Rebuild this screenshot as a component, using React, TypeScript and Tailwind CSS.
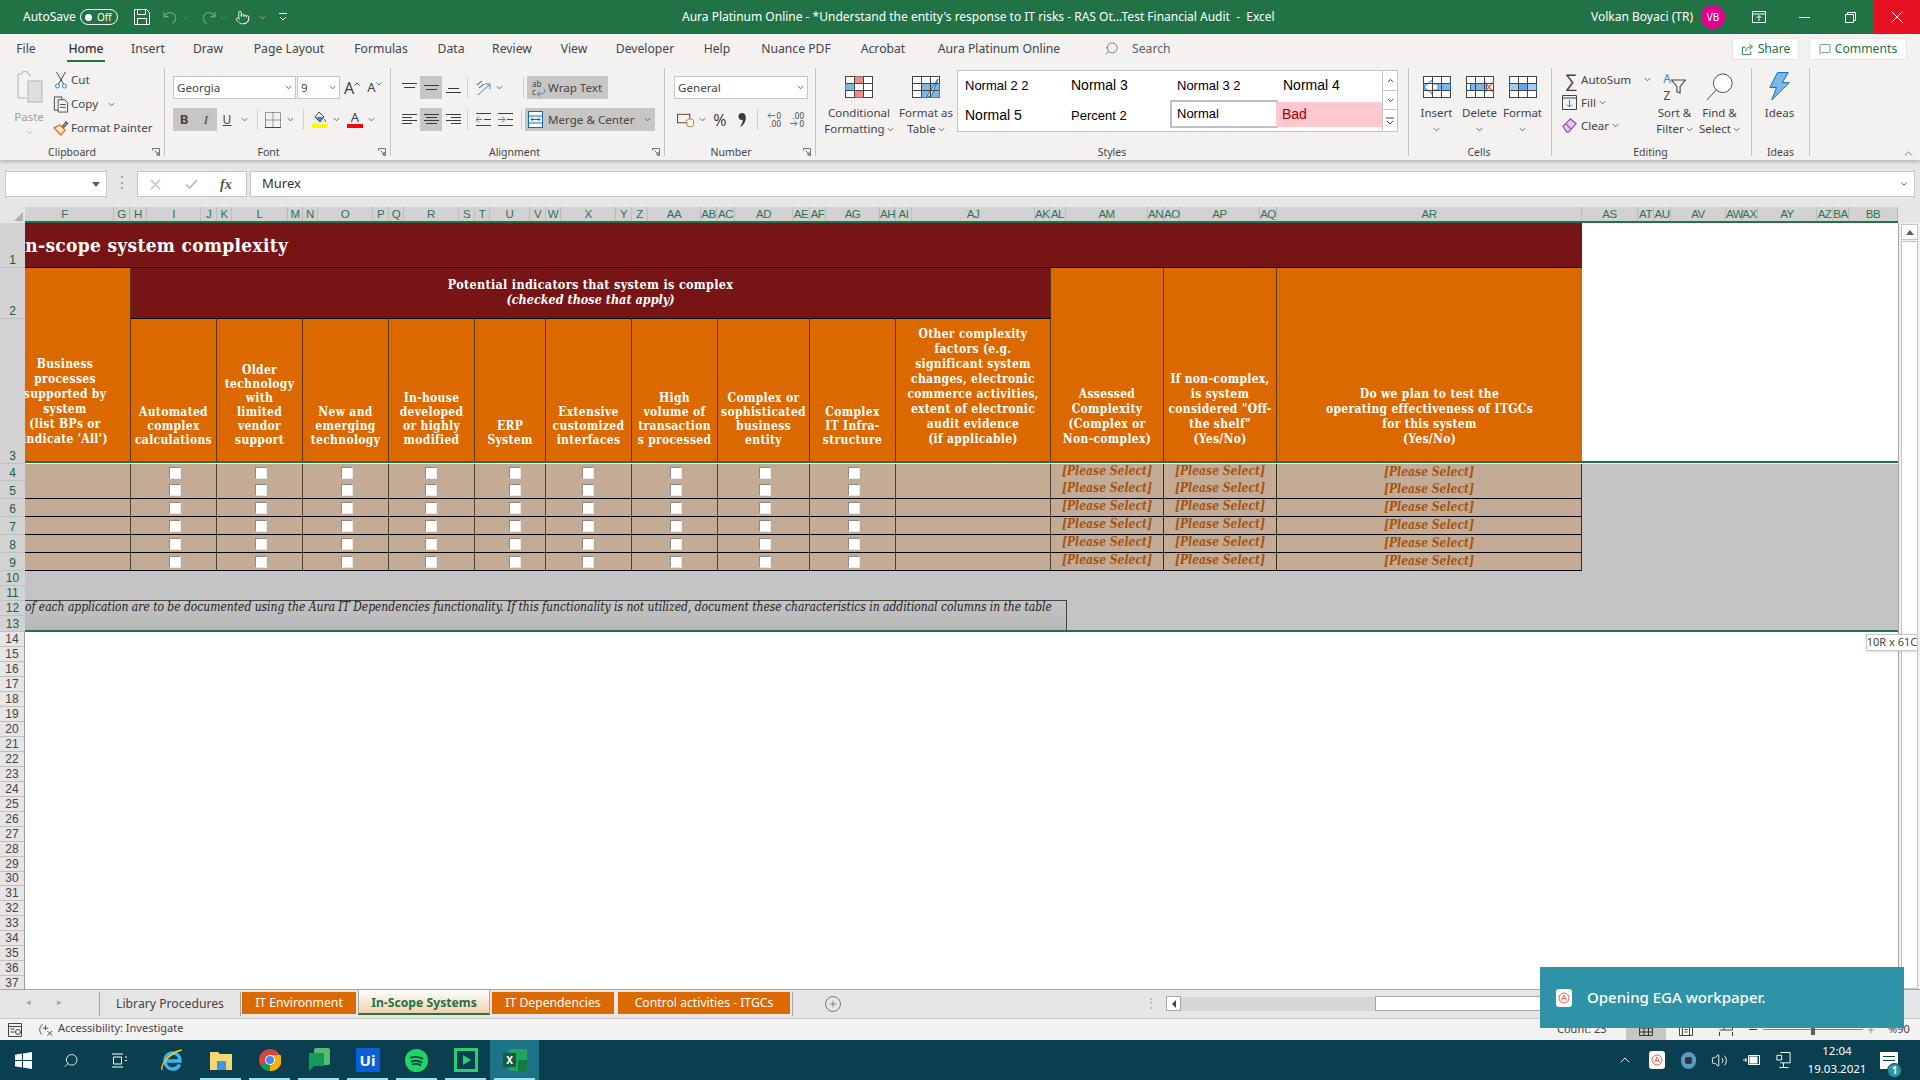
import { Pointer, Search, MessageSquare, Plus, ChevronUp, ChevronDown, Volume2 } from 'lucide-react'
import type { ReactNode } from 'react'

const serif = "font-['DejaVu_Serif_Condensed','DejaVu_Serif',serif]"

const Chev = ({ className = '' }: { className?: string }) => (
  <svg viewBox="0 0 8 5" className={`w-[7px] h-[5px] ${className}`} fill="none" stroke="#605e5c" strokeWidth="1.1">
    <path d="M1 1l3 3 3-3" />
  </svg>
)

const Launcher = () => (
  <svg viewBox="0 0 9 9" className="w-[8px] h-[8px]" fill="none" stroke="#605e5c" strokeWidth="1">
    <path d="M.5 3V.5H8.5V8.5H6M3 3l4 4M7 4.5V7H4.5" />
  </svg>
)

const Lines = ({ rows }: { rows: [number, number, number][] }) => (
  <svg viewBox="0 0 15 15" className="w-[15px] h-[15px]" stroke="#3b3a39" strokeWidth="1">
    {rows.map(([a, b, y]) => (
      <path key={y} d={`M${a} ${y}.5H${b}`} />
    ))}
  </svg>
)

// cell grid used by Insert, Delete, Format and the other big style buttons
const GridIcon = ({ children }: { children?: ReactNode }) => (
  <svg viewBox="0 0 30 24" className="w-[30px] h-[24px]" fill="none">
    <rect x="1.5" y="1.5" width="27" height="21" fill="#fff" stroke="#444" />
    {children}
    <path d="M10.5 1.5v21M19.5 1.5v21M1.5 8.5h27M1.5 15.5h27" stroke="#444" />
  </svg>
)

const AuraIcon = () => (
  <div className="w-[16px] h-[18px] bg-white rounded-[3px] flex items-center justify-center">
    <svg viewBox="0 0 12 12" className="w-[12px] h-[12px]" fill="none" stroke="#e8604c" strokeWidth="1">
      <circle cx="6" cy="6" r="5" />
      <path d="M3.5 8.5L6 3l2.5 5.500M4.500 6.500h3" />
    </svg>
  </div>
)

const tabs: [string, number][] = [
  ['File', 52], ['Home', 68], ['Insert', 56], ['Draw', 64], ['Page Layout', 98], ['Formulas', 86], ['Data', 54],
  ['Review', 68], ['View', 56], ['Developer', 86], ['Help', 58], ['Nuance PDF', 100], ['Acrobat', 74], ['Aura Platinum Online', 158],
]

function TitleBar() {
  return (
    <div className="h-[34px] bg-[#217346] text-white flex items-center text-[12px] shrink-0">
      <span className="ml-[23px] w-[57px]">AutoSave</span>
      <div className="w-[38px] h-[16px] border border-white rounded-full flex items-center pl-[4px] gap-[5px]">
        <div className="w-[7px] h-[7px] bg-white rounded-full" />
        <span className="text-[10px]">Off</span>
      </div>
      <svg viewBox="0 0 16 16" className="ml-[16px] w-[16px] h-[16px]" fill="none" stroke="#fff">
        <path d="M.5.5h12l3 3v12H.5zM3.500.5v5h8v-5M3.500 15.500v-6h9v6" />
      </svg>
      <svg viewBox="0 0 16 16" className="ml-[13px] w-[15px] h-[15px]" fill="none" stroke="#6fa78c" strokeWidth="1.2">
        <path d="M1 2v5h5M1.500 7C3 3 9 1 12 4.500s1.500 8-2 10" />
      </svg>
      <Chev className="ml-[4px] opacity-40 invert" />
      <svg viewBox="0 0 16 16" className="ml-[12px] w-[15px] h-[15px] -scale-x-100" fill="none" stroke="#6fa78c" strokeWidth="1.2">
        <path d="M1 2v5h5M1.500 7C3 3 9 1 12 4.500s1.500 8-2 10" />
      </svg>
      <Chev className="ml-[4px] opacity-40 invert" />
      <Pointer className="ml-[8px] w-[15px] h-[17px]" strokeWidth={1.4} />
      <Chev className="ml-[9px] invert" />
      <svg viewBox="0 0 8 8" className="ml-[13px] w-[8px] h-[8px]" fill="none" stroke="#fff">
        <path d="M0 .5h8M1 4l3 3 3-3" />
      </svg>
      <span className="ml-[395px] w-[560px] whitespace-nowrap text-[12px]">
        Aura Platinum Online - *Understand the entity's response to IT risks - RAS Ot...Test Financial Audit&nbsp; -&nbsp; Excel
      </span>
      <span className="ml-[349px] w-[109px] whitespace-nowrap">Volkan Boyaci (TR)</span>
      <div className="ml-[1px] w-[24px] h-[24px] rounded-full bg-[#e3008c] text-[10px] flex items-center justify-center">VB</div>
      <svg viewBox="0 0 14 12" className="ml-[27px] w-[14px] h-[12px]" fill="none" stroke="#fff">
        <path d="M.5.5h13v11H.5zM.5 3h13M7 10V5M4.500 7L7 4.500 9.500 7" />
      </svg>
      <div className="ml-[33px] w-[11px] h-px bg-white" />
      <svg viewBox="0 0 11 11" className="ml-[35px] w-[11px] h-[11px]" fill="none" stroke="#fff">
        <path d="M.5 2.500h8v8h-8zM2.500 2.500v-2h8v8h-2" />
      </svg>
      <div className="ml-[18px] w-[46px] h-full bg-[#e81123] flex items-center justify-center">
        <svg viewBox="0 0 12 12" className="w-[12px] h-[12px]" stroke="#fff">
          <path d="M.5.5l11 11M11.500.5l-11 11" />
        </svg>
      </div>
    </div>
  )
}

function TabRow() {
  return (
    <div className="h-[34px] bg-[#f3f2f1] flex items-start text-[12.2px] text-[#444] shrink-0">
      <div className="flex">
        {tabs.map(([name, w], i) => (
          <div
            key={name}
            style={{ width: w }}
            className={`h-[28px] flex items-center justify-center whitespace-nowrap ${i === 1 ? 'font-medium text-[#333]' : ''}`}
          >
            <span className={`h-[28px] leading-[30px] ${i === 1 ? 'border-b-[2px] border-[#217346] px-px' : ''}`}>{name}</span>
          </div>
        ))}
      </div>
      <Search className="ml-[26px] mt-[7px] w-[15px] h-[15px] -scale-x-100 text-[#605e5c]" strokeWidth={1.2} />
      <span className="ml-[13px] mt-[6px] w-[42px] text-[#605e5c]">Search</span>
      <div className="ml-[558px] mt-[4px] w-[67px] h-[22px] bg-white rounded-[2px] border border-[#e5e5e5] flex items-center justify-center gap-[4px] text-[#217346]">
        <svg viewBox="0 0 14 14" className="w-[13px] h-[13px]" fill="none" stroke="#217346">
          <path d="M5 4.500H1.500v8h9V9M5 9c0-3 3-5 6-5M9 1.500L12.500 4 9 7" />
        </svg>
        Share
      </div>
      <div className="ml-[10px] mt-[4px] w-[98px] h-[22px] bg-white rounded-[2px] border border-[#e5e5e5] flex items-center justify-center gap-[4px] text-[#217346]">
        <MessageSquare className="w-[12px] h-[12px]" strokeWidth={1.3} />
        Comments
      </div>
    </div>
  )
}

const Group = ({ label, w, pr = 0, launcher, children }: { label: string; w: number; pr?: number; launcher?: boolean; children: ReactNode }) => (
  <>
    <div style={{ width: w }} className="flex flex-col h-[92px] shrink-0">
      <div className="h-[76px] flex">{children}</div>
      <div style={{ paddingRight: pr }} className="h-[16px] pt-px relative flex items-center justify-center text-[10.5px] text-[#444]">
        {label}
        {launcher && (
          <div className="absolute right-[4px] top-[4px]">
            <Launcher />
          </div>
        )}
      </div>
    </div>
    <div className="w-px h-[88px] bg-[#c8c6c4] shrink-0" />
  </>
)

const Big = ({ w, lines, children }: { w: number; lines: ReactNode[]; children: ReactNode }) => (
  <div style={{ width: w }} className="flex flex-col items-center shrink-0">
    <div className="h-[37px] flex items-center justify-center">{children}</div>
    <div className="text-[11.5px] leading-[16px] text-[#444] text-center whitespace-nowrap">
      {lines.map((l, i) => (
        <div key={i} className="h-[16px] flex items-center justify-center gap-[2px]">
          {l}
        </div>
      ))}
    </div>
  </div>
)

const Sep = ({ ml = 0, mr = 0 }: { ml?: number; mr?: number }) => (
  <div style={{ marginLeft: ml, marginRight: mr }} className="w-px h-[21px] bg-[#d2d0ce] shrink-0" />
)

function Ribbon() {
  return (
    <div className="h-[92px] bg-[#f3f2f1] flex items-start shadow-[0_2px_3px_rgba(0,0,0,0.2)] relative z-10 text-[#444] shrink-0">
      <Group label="Clipboard" w={164} pr={20} launcher>
        <div className="w-[50px] ml-[4px] flex flex-col items-center pt-[3px] text-[#a19f9d]">
          <svg viewBox="0 0 28 32" className="w-[28px] h-[32px]" fill="none" stroke="#b5b3b1">
            <path d="M15 6V3H13a3 3 0 0 0-6 0H3v24h9" />
            <rect x="13" y="10" width="14" height="21" fill="#e1dfdd" />
          </svg>
          <span className="text-[11.5px] mt-[5px]">Paste</span>
          <Chev className="mt-[5px] opacity-40" />
        </div>
        <div className="flex flex-col text-[11.6px] -ml-[2px]">
          {['Cut', 'Copy', 'Format Painter'].map((t, i) => (
            <div key={t} className="h-[24px] flex items-center">
              <div className="w-[18px] flex justify-center">
                {i === 0 && (
                  <svg viewBox="0 0 12 18" className="w-[12px] h-[18px]" fill="none" stroke="#444">
                    <path d="M1.500 1l7 12M10.500 1l-7 12" />
                    <circle cx="2.500" cy="15" r="2" stroke="#2b88d8" />
                    <circle cx="9.500" cy="15" r="2" stroke="#2b88d8" />
                  </svg>
                )}
                {i === 1 && (
                  <svg viewBox="0 0 16 18" className="w-[16px] h-[17px]" fill="#f3f2f1" stroke="#444">
                    <path d="M1 1h8v14H1z" />
                    <path d="M5 4h7l3 3v10H5zM7 9h6M7 12h6" />
                  </svg>
                )}
                {i === 2 && (
                  <svg viewBox="0 0 16 16" className="w-[16px] h-[16px]" fill="none" strokeWidth="1.2">
                    <path d="M9 7l4-5 1.500 1.500L10 8" stroke="#444" />
                    <path d="M7 5l5 5-4 5-7-7z" fill="#fbe3c8" stroke="#d86b16" />
                  </svg>
                )}
              </div>
              <span className="ml-[1px] whitespace-nowrap">{t}</span>
              {i === 1 && <Chev className="ml-[10px]" />}
            </div>
          ))}
        </div>
      </Group>

      <Group label="Font" w={225} pr={18} launcher>
        <div className="pl-[8px] pt-[8px] flex flex-col gap-[9px]">
          <div className="flex items-center h-[23px]">
            <div className="w-[123px] h-[23px] bg-white border border-[#c8c6c4] flex items-center justify-between px-[3px] text-[11.6px]">
              Georgia <Chev />
            </div>
            <div className="w-[43px] h-[23px] ml-[1px] bg-white border border-[#c8c6c4] flex items-center justify-between px-[3px] text-[11.6px]">
              9 <Chev />
            </div>
            <span className="ml-[4px] text-[16px] leading-none">A</span>
            <svg viewBox="0 0 6 4" className="w-[6px] h-[4px] -mt-[8px]" fill="none" stroke="#444"><path d="M.5 3.500L3 1l2.500 2.500" /></svg>
            <span className="ml-[7px] text-[13px] leading-none">A</span>
            <svg viewBox="0 0 6 4" className="w-[6px] h-[4px] -mt-[8px]" fill="none" stroke="#2b88d8"><path d="M.5.5L3 3 5.500.5" /></svg>
          </div>
          <div className="flex items-center h-[23px]">
            <div className="w-[44px] h-[23px] bg-[#c8c6c4] flex items-center text-[13px]">
              <span className="w-[22px] text-center font-bold">B</span>
              <span className="w-[22px] text-center italic font-['Liberation_Serif']">I</span>
            </div>
            <span className="w-[20px] text-center text-[12px] underline">U</span>
            <Chev className="ml-[4px]" />
            <Sep ml={9} mr={7} />
            <svg viewBox="0 0 16 16" className="w-[16px] h-[16px]" fill="none" stroke="#444" strokeDasharray="1 1">
              <path d="M.5.5h15v15H.5zM8 .5v15M.5 8h15" />
              <path d="M0 15.500h16" strokeDasharray="none" />
            </svg>
            <Chev className="ml-[6px]" />
            <Sep ml={9} mr={7} />
            <div className="w-[17px] flex flex-col items-center">
              <svg viewBox="0 0 14 12" className="w-[14px] h-[12px]" fill="none" stroke="#444">
                <path d="M6 1l5 5-4 5-5-5zM11 8c1 1 2 2 1 3" />
                <path d="M3 6h8l-4 5z" fill="#2b88d8" stroke="none" />
              </svg>
              <div className="w-[16px] h-[4px] mt-px bg-[#ffff00]" />
            </div>
            <Chev className="ml-[5px]" />
            <div className="ml-[7px] w-[16px] flex flex-col items-center text-[13px] leading-[13px]">
              A<div className="w-[16px] h-[4px] bg-[#ff0000]" />
            </div>
            <Chev className="ml-[5px]" />
          </div>
        </div>
      </Group>

      <Group label="Alignment" w={273} pr={26} launcher>
        <div className="pl-[11px] pt-[8px] flex flex-col gap-[9px]">
          <div className="flex items-center h-[23px]">
            <div className="w-[18px] flex"><Lines rows={[[0, 15, 3], [2, 13, 7]]} /></div>
            <div className="w-[22px] h-[23px] bg-[#c8c6c4] flex items-center justify-center"><Lines rows={[[0, 15, 5], [2, 13, 9]]} /></div>
            <div className="w-[22px] pl-[4px] flex"><Lines rows={[[2, 13, 8], [0, 15, 12]]} /></div>
            <Sep ml={3} mr={7} />
            <svg viewBox="0 0 17 18" className="w-[17px] h-[18px]" fill="none" stroke="#444">
              <path d="M2 6l5-4M4 9l5-4" />
              <path d="M3 16L14 6M10 5h5v5" stroke="#2b88d8" />
            </svg>
            <Chev className="ml-[4px]" />
            <Sep ml={20} mr={3} />
            <div className="w-[81px] h-[23px] bg-[#c8c6c4] flex items-center text-[11.6px] pl-[5px] gap-[2px] whitespace-nowrap">
              <svg viewBox="0 0 14 18" className="w-[14px] h-[18px] shrink-0" fill="none" stroke="#2b88d8">
                <path d="M12 10c2 4-1 5-6 5M8 12.500L5 15l3 2.500" />
                <text x="0" y="8" fontSize="8" fill="#444" stroke="none">ab</text>
                <text x="0" y="16" fontSize="8" fill="#444" stroke="none">c</text>
              </svg>
              Wrap Text
            </div>
          </div>
          <div className="flex items-center h-[23px]">
            <div className="w-[18px] flex"><Lines rows={[[0, 15, 2], [0, 10, 5], [0, 15, 8], [0, 10, 11]]} /></div>
            <div className="w-[22px] h-[23px] bg-[#c8c6c4] flex items-center justify-center"><Lines rows={[[0, 15, 2], [2, 13, 5], [0, 15, 8], [2, 13, 11]]} /></div>
            <div className="w-[22px] pl-[4px] flex"><Lines rows={[[0, 15, 2], [5, 15, 5], [0, 15, 8], [5, 15, 11]]} /></div>
            <Sep ml={3} mr={8} />
            <svg viewBox="0 0 15 13" className="w-[15px] h-[13px]" fill="none" stroke="#444">
              <path d="M0 .5h15M0 12.500h15M8 6.500h7" />
              <path d="M0 6.500h6M3 3.500l-3 3 3 3" stroke="#2b88d8" />
            </svg>
            <svg viewBox="0 0 15 13" className="ml-[7px] w-[15px] h-[13px]" fill="none" stroke="#444">
              <path d="M0 .5h15M0 12.500h15M9 6.500h6" />
              <path d="M0 6.500h7M4 3.500l3 3-3 3" stroke="#2b88d8" />
            </svg>
            <Sep ml={8} mr={3} />
            <div className="w-[130px] h-[23px] bg-[#c8c6c4] flex items-center text-[11.6px] pl-[3px] gap-[5px] whitespace-nowrap">
              <svg viewBox="0 0 15 17" className="w-[15px] h-[17px] shrink-0" fill="#fff" stroke="#0f6cbd">
                <rect x=".5" y=".5" width="14" height="16" />
                <path d="M.5 5h14M.5 12h14M3 8.500h9M5 6.500l-2 2 2 2M10 6.500l2 2-2 2" fill="none" />
              </svg>
              Merge &amp; Center
              <Chev className="ml-[5px]" />
            </div>
          </div>
        </div>
      </Group>

      <Group label="Number" w={150} pr={18} launcher>
        <div className="pl-[9px] pt-[8px] flex flex-col gap-[9px]">
          <div className="w-[134px] h-[23px] bg-white border border-[#c8c6c4] flex items-center justify-between px-[3px] text-[11.6px]">
            General <Chev />
          </div>
          <div className="flex items-center h-[23px] pl-[3px]">
            <svg viewBox="0 0 18 16" className="w-[17px] h-[15px]" fill="none" stroke="#444">
              <rect x=".5" y="2.500" width="13" height="9" />
              <ellipse cx="14" cy="9" rx="3.500" ry="1.500" fill="#fff" stroke="#d86b16" />
              <path d="M10.500 9v5c0 2 7 2 7 0V9" fill="#fff" stroke="#d86b16" />
            </svg>
            <Chev className="ml-[5px]" />
            <span className="ml-[5px] w-[18px] text-center text-[16px]">%</span>
            <svg viewBox="0 0 8 14" className="ml-[9px] w-[8px] h-[14px] mr-[3px]" fill="#3b3a39">
              <circle cx="4" cy="3.500" r="3.500" />
              <path d="M5 5c2 0 3-1 3-2 0 5-2 9-6 11 2-3 3-6 3-9z" />
            </svg>
            <Sep ml={8} mr={6} />
            <div className="w-[17px] flex flex-col text-[8px] leading-[8px] items-end">
              <div className="flex items-center gap-[1px]">
                <svg viewBox="0 0 8 7" className="w-[8px] h-[7px]" fill="none" stroke="#2b88d8"><path d="M8 3.500H1M3.500 1L1 3.500 3.500 6" /></svg>
                0
              </div>
              <div>.00</div>
            </div>
            <div className="ml-[6px] w-[17px] flex flex-col text-[8px] leading-[8px] items-end">
              <div>.00</div>
              <div className="flex items-center gap-[1px]">
                <svg viewBox="0 0 8 7" className="w-[8px] h-[7px]" fill="none" stroke="#2b88d8"><path d="M0 3.500h7M4.500 1L7 3.500 4.500 6" /></svg>
                0
              </div>
            </div>
          </div>
        </div>
      </Group>

      <Group label="Styles" w={592}>
        <div className="ml-[9px] flex shrink-0">
          <Big w={68} lines={['Conditional', <>Formatting <Chev /></>]}>
            <GridIcon>
              <rect x="10.500" y="1.500" width="9" height="7" fill="#f08a8a" />
              <rect x="1.500" y="8.500" width="9" height="7" fill="#7cb7e8" />
              <rect x="10.500" y="15.500" width="9" height="7" fill="#f08a8a" />
            </GridIcon>
          </Big>
          <Big w={66} lines={['Format as', <>Table <Chev /></>]}>
            <GridIcon>
              <rect x="10.500" y="8.500" width="18" height="14" fill="#7cb7e8" />
              <path d="M27 4L18 18l-3 5 6-3z" fill="#cfe3f5" stroke="#2b6ca8" />
            </GridIcon>
          </Big>
        </div>
        <div className="-ml-[2px] mt-[2px] w-[441px] h-[62px] bg-white border border-[#c8c6c4] flex font-['Liberation_Sans'] text-[14px] text-black shrink-0">
          <div className="grid grid-cols-[106px_106px_106px_106px] grid-rows-[29px_31px] w-[424px]">
            <div className="flex items-center pl-[7px] text-[13px]">Normal 2 2</div>
            <div className="flex items-center pl-[7px]">Normal 3</div>
            <div className="flex items-center pl-[7px] text-[13px]">Normal 3 2</div>
            <div className="flex items-center pl-[7px]">Normal 4</div>
            <div className="flex items-center pl-[7px]">Normal 5</div>
            <div className="flex items-center pl-[7px] text-[13px]">Percent 2</div>
            <div className="flex items-center pl-[5px] border-2 border-[#c0c0c0] text-[13px] -mr-[2px] mb-[3px]">Normal</div>
            <div className="flex items-center pl-[6px] bg-[#ffc7ce] text-[#9c0006] mt-[2px] mb-[4px] -mr-[3px]">Bad</div>
          </div>
          <div className="ml-auto w-[15px] flex flex-col border-l border-[#c8c6c4] bg-[#f3f2f1]">
            <div className="h-[20px] flex items-center justify-center bg-white border-b border-[#c8c6c4]"><ChevronUp className="w-[9px] h-[9px]" strokeWidth={2} /></div>
            <div className="h-[19px] flex items-center justify-center bg-white border-b border-[#c8c6c4]"><ChevronDown className="w-[9px] h-[9px]" strokeWidth={2} /></div>
            <div className="flex-1 flex items-center justify-center bg-white"><svg viewBox="0 0 8 8" className="w-[8px] h-[8px]" fill="none" stroke="#444"><path d="M0 1h8M1 4l3 3 3-3" /></svg></div>
          </div>
        </div>
      </Group>

      <Group label="Cells" w={142} pr={2}>
        <div className="pl-[6px] flex">
          <Big w={43} lines={['Insert', <Chev />]}>
            <GridIcon>
              <path d="M1.500 8.500h27v7H1.500z" fill="#7cb7e8" stroke="#0f6cbd" />
              <path d="M10 5L2 12l8 7v-4h6V9h-6z" fill="#fff" stroke="#2b88d8" />
            </GridIcon>
          </Big>
          <Big w={43} lines={['Delete', <Chev />]}>
            <GridIcon>
              <path d="M5.500 8.500h16v7h-16z" fill="#7cb7e8" stroke="#0f6cbd" />
              <path d="M19 6l10 12M29 6L19 18" stroke="#e8604c" strokeWidth="1.200" />
            </GridIcon>
          </Big>
          <Big w={43} lines={['Format', <Chev />]}>
            <GridIcon>
              <path d="M10.500 8.500h9v7h-9z" fill="#2b88d8" />
              <path d="M1.500 8.500h27v7H1.500z" fill="#7cb7e8" fillOpacity=".7" stroke="#0f6cbd" />
            </GridIcon>
          </Big>
        </div>
      </Group>

      <Group label="Editing" w={199} pr={2}>
        <div className="pl-[10px] w-[105px] text-[11.6px] shrink-0">
          <div className="h-[23px] flex items-center">
            <span className="w-[18px] text-[18px] leading-none text-center">∑</span>
            <span className="ml-[1px]">AutoSum</span>
            <Chev className="ml-[13px]" />
          </div>
          <div className="h-[23px] flex items-center">
            <svg viewBox="0 0 15 15" className="w-[15px] h-[15px] mr-[4px]" fill="none" stroke="#444">
              <path d="M.5.5h14v14H.5zM.5 3h14" />
              <path d="M7.500 5v7M5 9.500l2.500 2.500L10 9.500" stroke="#2b88d8" />
            </svg>
            Fill <Chev className="ml-[3px]" />
          </div>
          <div className="h-[23px] flex items-center">
            <svg viewBox="0 0 16 16" className="w-[15px] h-[15px] mr-[4px]" fill="#e8c8ec" stroke="#9b4fad" strokeWidth="1.300">
              <path d="M1 9l8-8 6 5-8 9H5zM4 6l6 6" />
            </svg>
            Clear <Chev className="ml-[3px]" />
          </div>
        </div>
        <div className="-ml-[5px] flex">
          <Big w={45} lines={['Sort &', <>Filter <Chev /></>]}>
            <div className="flex items-center">
              <div className="text-[12px] leading-[17px] text-center"><div className="text-[#2b88d8]">A</div><div>Z</div></div>
              <svg viewBox="0 0 14 14" className="w-[15px] h-[17px]" fill="none" stroke="#444"><path d="M.5 1h13L8.500 7v6l-3-1V7z" /></svg>
            </div>
          </Big>
          <Big w={45} lines={['Find &', <>Select <Chev /></>]}>
            <svg viewBox="0 0 30 30" className="w-[30px] h-[28px]" fill="none" stroke="#444">
              <circle cx="18" cy="11" r="10" fill="#fff" />
              <path d="M11 18L1 29" />
            </svg>
          </Big>
        </div>
      </Group>

      <Group label="Ideas" w={57}>
        <Big w={55} lines={['Ideas']}>
          <svg viewBox="0 0 22 30" className="w-[23px] h-[29px]" fill="#7cb7e8" stroke="#0f6cbd">
            <path d="M9 .5h11L14 11h7L3 29l5-13H1z" />
          </svg>
        </Big>
      </Group>
      <ChevronUp className="ml-[92px] mt-[79px] w-[13px] h-[13px] text-[#444]" strokeWidth={1.3} />
    </div>
  )
}

function FormulaBar() {
  return (
    <div className="h-[47px] bg-[#e6e6e6] flex items-start pt-[11px] shrink-0">
      <div className="ml-[5px] w-[102px] h-[26px] bg-white border border-[#c8c6c4] flex items-center justify-end pr-[6px]">
        <div className="w-0 h-0 border-x-[4px] border-x-transparent border-t-[5px] border-t-[#605e5c]" />
      </div>
      <span className="w-[30px] text-center text-[#a19f9d] leading-[22px]">⋮</span>
      <div className="w-[110px] h-[26px] bg-white border border-[#c8c6c4] flex items-center text-[#bdbbb9]">
        <svg viewBox="0 0 12 12" className="ml-[12px] w-[11px] h-[11px]" stroke="#bdbbb9" strokeWidth="1.400"><path d="M1 1l10 10M11 1L1 11" /></svg>
        <svg viewBox="0 0 14 12" className="ml-[24px] w-[13px] h-[11px]" fill="none" stroke="#bdbbb9" strokeWidth="1.800"><path d="M1 6l4 4 8-9" /></svg>
        <span className="ml-[22px] italic font-['Liberation_Serif'] font-bold text-[14px] text-[#555]">fx</span>
      </div>
      <div className="ml-[3px] w-[1665px] h-[26px] bg-white border border-[#c8c6c4] flex items-center justify-between px-[11px] text-[13px] text-[#333]">
        Murex
        <ChevronDown className="w-[10px] h-[10px] -mr-[6px] text-[#605e5c]" strokeWidth={2.4} />
      </div>
    </div>
  )
}

const columns: [string, number][] = [
  ['F', 89], ['G', 16], ['H', 17], ['I', 54], ['J', 16], ['K', 15], ['L', 56], ['M', 15], ['N', 15], ['O', 55], ['P', 16], ['Q', 15],
  ['R', 55], ['S', 16], ['T', 15], ['U', 40], ['V', 16], ['W', 15], ['X', 55], ['Y', 16], ['Z', 16], ['AA', 53], ['AB', 16], ['AC', 18],
  ['AD', 58], ['AE', 17], ['AF', 16], ['AG', 54], ['AH', 16], ['AI', 16], ['AJ', 123], ['AK', 15], ['AL', 16], ['AM', 82], ['AN', 16],
  ['AO', 16], ['AP', 80], ['AQ', 17], ['AR', 305], ['AS', 56], ['AT', 16], ['AU', 17], ['AV', 55], ['AW', 16], ['AX', 16], ['AY', 59],
  ['AZ', 16], ['BA', 16], ['BB', 49],
]

// nudges of the checkbox from the centre of its column
const checkOffsets = [2, 2, 2, -1, 10, -1, 2, 2, 2]

const sheetCols = 'grid-cols-[106px_86px_86px_86px_86px_71px_86px_86px_92px_86px_155px_113px_113px_305px_316px]'

const Head = ({ className = '', lines, tight }: { className?: string; lines: string[]; tight?: boolean }) => (
  <div className={`bg-[#dc6900] border-r border-[#5c3513] overflow-hidden flex flex-col justify-end items-center pb-[14px] text-white font-bold text-[12px] tracking-[0.3px] ${serif} ${tight ? 'leading-[14px]' : 'leading-[15px]'} ${className}`}>
    {lines.map((l) => (
      <div key={l} className="whitespace-nowrap">{l}</div>
    ))}
  </div>
)

const Check = ({ offset }: { offset: number }) => (
  <div style={{ marginLeft: offset }} className="w-[12px] h-[12px] bg-white border-l border-t border-[#8a8a8a] border-r border-b border-r-[#e8e8e8] border-b-[#e8e8e8]" />
)

const Please = ({ wide }: { wide?: boolean }) => (
  <span className={`${serif} italic font-bold text-[12px] text-[#a5540f] whitespace-nowrap ${wide ? '-mt-[1px]' : '-mt-[3px]'}`}>[Please Select]</span>
)

function DataRow({ first }: { first?: boolean }) {
  return (
    <div className={`grid ${sheetCols} ${first ? 'h-[17px]' : 'h-[18px]'}`}>
      <div className="bg-[#c4ab96] border-b border-black border-r border-r-[#4d4035]" />
      {checkOffsets.map((offset, i) => (
        <div key={i} className="bg-[#c4ab96] border-b border-black border-r border-r-[#4d4035] flex items-center justify-center">
          <Check offset={offset} />
        </div>
      ))}
      <div className="bg-[#c4ab96] border-b border-black border-r border-r-[#4d4035]" />
      {[0, 1, 2].map((i) => (
        <div key={i} className="bg-[#c4ab96] border-b border-black border-r border-r-[#3b2a1a] flex items-center justify-center">
          <Please wide={i === 2} />
        </div>
      ))}
      <div className="bg-[#c4c4c4]" />
    </div>
  )
}

function RowHead({ n, h, on }: { n: number; h: string; on?: boolean }) {
  return (
    <div className={`${h} shrink-0 flex items-end justify-center font-['Liberation_Sans'] text-[12px] leading-[14px] border-b ${on ? 'border-[#c0c0c0] bg-[#d2d2d2] text-[#1f5c3d]' : 'border-[#c0c0c0] border-r border-r-[#9a9a9a] bg-[#e6e6e6] text-[#444]'}`}>
      {n}
    </div>
  )
}

function Sheet() {
  return (
    <div className="flex-1 min-h-0 flex flex-col bg-white relative">
      <div className="h-[16px] flex shrink-0 bg-[#e6e6e6]">
        <div className="w-[25px] flex items-end justify-end pb-[2px] pr-[2px]">
          <div className="w-0 h-0 border-l-[9px] border-l-transparent border-b-[9px] border-b-[#b1b1b1]" />
        </div>
        <div className="flex border-b-[2px] border-[#217346] bg-[#d2d2d2] w-[1873px]">
          {columns.map(([c, w], i) => (
            <div
              key={c}
              style={{ width: w, paddingRight: i === 0 ? 9 : 0 }}
              className="shrink-0 border-r border-[#bdbdbd] text-center font-['Liberation_Sans'] text-[11.5px] tracking-[-0.5px] leading-[15px] text-[#2f7355] whitespace-nowrap"
            >
              {c}
            </div>
          ))}
        </div>
        <div className="flex-1" />
      </div>
      <div className="flex-1 min-h-0 flex overflow-hidden">
        <div className="w-[25px] shrink-0 flex flex-col bg-[#e6e6e6]">
          <RowHead n={1} h="h-[45px]" on />
          <RowHead n={2} h="h-[51px]" on />
          <RowHead n={3} h="h-[145px]" on />
          {[4, 5, 6, 7, 8, 9].map((n) => (
            <RowHead key={n} n={n} h={n === 4 ? 'h-[17px]' : 'h-[18px]'} on />
          ))}
          {[10, 11, 12, 13].map((n) => (
            <RowHead key={n} n={n} h={n === 13 ? 'h-[16px]' : 'h-[15px]'} on />
          ))}
          {Array.from({ length: 24 }).map((_, i) => (
            <RowHead key={i} n={i + 14} h="h-[14.97px]" />
          ))}
        </div>
        <div className="w-[1873px] shrink-0 flex flex-col">
          <div className={`grid ${sheetCols} grid-rows-[45px_51px_142px] h-[238px] overflow-hidden`}>
            <div className={`col-span-14 bg-[#771416] border-b border-black flex items-center overflow-hidden pt-px text-white font-bold text-[19px] tracking-[0.3px] ${serif}`}>
              <span className="-ml-[8px] whitespace-nowrap">In-scope system complexity</span>
            </div>
            <div className="bg-white" />
            <Head className="row-span-2 [&>div]:-ml-[25px]" lines={['Business', 'processes', 'supported by', 'system', '(list BPs or', "indicate 'All')"]} />
            <div className={`col-span-10 bg-[#771416] border-b border-black border-r border-r-[#5c3513] flex flex-col items-center pt-[9px] text-white text-[12.5px] leading-[15px] font-bold ${serif}`}>
              <div className="tracking-[0.3px]">Potential indicators that system is complex</div>
              <div className="italic">(checked those that apply)</div>
            </div>
            <Head className="row-span-2" lines={['Assessed', 'Complexity', '(Complex or', 'Non-complex)']} />
            <Head className="row-span-2" lines={['If non-complex,', 'is system', 'considered "Off-', 'the shelf"', '(Yes/No)']} />
            <Head className="row-span-2 border-r-0" lines={['Do we plan to test the', 'operating effectiveness of ITGCs', 'for this system', '(Yes/No)']} />
            <div className="row-span-2 bg-white" />
            <Head tight lines={['Automated', 'complex', 'calculations']} />
            <Head tight lines={['Older', 'technology', 'with', 'limited', 'vendor', 'support']} />
            <Head tight lines={['New and', 'emerging', 'technology']} />
            <Head tight lines={['In-house', 'developed', 'or highly', 'modified']} />
            <Head tight lines={['ERP', 'System']} />
            <Head tight lines={['Extensive', 'customized', 'interfaces']} />
            <Head tight lines={['High', 'volume of', 'transaction', 's processed']} />
            <Head tight lines={['Complex or', 'sophisticated', 'business', 'entity']} />
            <Head tight lines={['Complex', 'IT Infra-', 'structure']} />
            <Head lines={['Other complexity', 'factors (e.g.', 'significant system', 'changes, electronic', 'commerce activities,', 'extent of electronic', 'audit evidence', '(if applicable)']} />
          </div>
          <div className="h-[2px] bg-[#217346]" />
          <div className="h-[1px] bg-white" />
          <DataRow first />
          <DataRow />
          <DataRow />
          <DataRow />
          <DataRow />
          <DataRow />
          <div className="h-[59px] bg-[#c4c4c4] flex flex-col justify-end">
            <div className={`w-[1042px] h-[30px] border-t border-r border-[#444] bg-gradient-to-b from-[#c4c4c4] to-[#b7b7b7] overflow-hidden whitespace-nowrap italic text-[12px] tracking-[-0.03px] leading-[13px] text-[#222] ${serif}`}>
              of each application are to be documented using the Aura IT Dependencies functionality. If this functionality is not utilized, document these characteristics in additional columns in the table
            </div>
          </div>
          <div className="h-[2px] bg-[#217346]" />
        </div>
        <div className="flex-1 flex flex-col items-center border-l border-[#a6a6a6] bg-[#f0f0f0] px-[2px]">
          <div className="w-full h-[16px] mt-[1px] bg-white border border-[#c8c6c4] flex items-center justify-center">
            <div className="w-0 h-0 border-x-[4px] border-x-transparent border-b-[5px] border-b-[#605e5c]" />
          </div>
          <div className="w-full flex-1 bg-white border border-[#c8c6c4] mt-px" />
        </div>
      </div>
      <div className="absolute right-[2px] top-[427px] w-[52px] h-[17px] bg-white border border-[#c8c6c4] shadow-sm flex items-center justify-center text-[11px] text-[#444] whitespace-nowrap">
        10R x 61C
      </div>
    </div>
  )
}

function SheetTabs() {
  return (
    <div className="h-[29px] bg-[#e6e6e6] border-t border-[#a6a6a6] flex items-start text-[12.2px] text-[#444] shrink-0">
      <span className="ml-[26px] mt-[5px] w-[31px] text-[9px] text-[#a6a6a6]">◂</span>
      <span className="mt-[5px] w-[42px] text-[9px] text-[#a6a6a6]">▸</span>
      <div className="w-[142px] h-[24px] mt-[2px] border-x border-[#a6a6a6] flex items-center justify-center whitespace-nowrap pt-px">Library Procedures</div>
      <div className="ml-[1px] w-[114px] h-[22px] mt-[2px] bg-[#dc6900] text-white flex items-center justify-center pt-px">IT Environment</div>
      <div className="ml-[2px] w-[132px] h-[25px] border-x border-[#a6a6a6] bg-gradient-to-b from-white to-[#f2cfa8] border-b-[2px] border-b-[#217346] text-[#217346] font-bold flex items-center justify-center whitespace-nowrap pt-[3px]">In-Scope Systems</div>
      <div className="ml-[2px] w-[122px] h-[22px] mt-[2px] bg-[#dc6900] text-white flex items-center justify-center pt-px">IT Dependencies</div>
      <div className="ml-[4px] w-[172px] h-[22px] mt-[2px] bg-[#dc6900] text-white flex items-center justify-center whitespace-nowrap pt-px">Control activities - ITGCs</div>
      <div className="ml-[2px] w-px h-[24px] mt-[2px] bg-[#a6a6a6]" />
      <div className="ml-[32px] mt-[6px] w-[16px] h-[16px] rounded-full border border-[#7a7a7a] flex items-center justify-center">
        <Plus className="w-[10px] h-[10px] text-[#7a7a7a]" strokeWidth={2} />
      </div>
      <span className="ml-[304px] mt-[3px] text-[#a6a6a6] leading-[20px]">⋮</span>
      <div className="ml-[9px] mt-[6px] w-[15px] h-[15px] bg-white border border-[#a6a6a6] flex items-center justify-center">
        <div className="w-0 h-0 border-y-[4px] border-y-transparent border-r-[4px] border-r-[#444]" />
      </div>
      <div className="mt-[7px] w-[194px] h-[14px] bg-[#d6d6d6]" />
      <div className="mt-[6px] flex-1 h-[15px] bg-white border border-[#a6a6a6]" />
      <div className="w-[18px] h-[16px] bg-[#e6e6e6]" />
    </div>
  )
}

function StatusBar() {
  return (
    <div className="h-[22px] bg-[#f3f2f1] border-t border-[#c8c8c8] flex items-center text-[11px] text-[#444] shrink-0">
      <svg viewBox="0 0 14 14" className="ml-[8px] w-[14px] h-[14px]" fill="none" stroke="#444">
        <path d="M.5.5h13v13H.5zM.5 3.500h13M2.500 6h4M2.500 9h4" />
        <circle cx="10" cy="9" r="2.500" />
      </svg>
      <svg viewBox="0 0 16 14" className="ml-[16px] w-[15px] h-[14px]" fill="none" stroke="#444">
        <path d="M5 1C1 3 1 9 4 12M8 2v5M5 5h6M10 8l5 5M15 8l-5 5" />
      </svg>
      <span className="ml-[5px] -mt-[2px] whitespace-nowrap w-[1499px]">Accessibility: Investigate</span>
      <div className="w-[69px] whitespace-nowrap">Count: 23</div>
      <div className="w-[40px] h-full bg-[#c8c6c4] flex items-center justify-center">
        <svg viewBox="0 0 14 12" className="w-[14px] h-[12px]" fill="none" stroke="#333"><path d="M.5.5h13v11H.5zM5 .5v11M9.500.5v11M.5 4h13M.5 8h13" /></svg>
      </div>
      <svg viewBox="0 0 14 12" className="ml-[13px] w-[14px] h-[12px]" fill="none" stroke="#444"><path d="M.5.5h13v11H.5zM3.500 3h7v9h-7zM5.500 5.500h3M5.500 8h3" /></svg>
      <svg viewBox="0 0 14 12" className="ml-[26px] w-[14px] h-[12px]" fill="none" stroke="#444"><path d="M.5.500h13v5.500H.5M.5 12V8M13.500 12V8M5 1v5" /></svg>
      <div className="ml-[16px] w-[8px] h-px bg-[#444]" />
      <div className="ml-[6px] w-[100px] h-px bg-[#8a8886] flex items-center justify-center">
        <div className="w-[4px] h-[11px] bg-[#605e5c]" />
      </div>
      <Plus className="ml-[3px] w-[10px] h-[10px]" strokeWidth={1.2} />
      <span className="ml-[12px]">%90</span>
    </div>
  )
}

const TaskSlot = ({ active, children }: { active?: boolean; children: ReactNode }) => (
  <div className={`w-[49px] h-[40px] relative flex items-center justify-center shrink-0 ${active ? 'bg-[#1c7486]' : ''}`}>
    {children}
    <div className="absolute bottom-0 left-[4px] right-[4px] h-[2px] bg-[#9fe3f2]" />
  </div>
)

function Taskbar() {
  return (
    <div className="h-[40px] bg-[#093f4e] flex items-center text-white shrink-0">
      <svg viewBox="0 0 16 16" className="ml-[15px] w-[17px] h-[17px]" fill="#fff">
        <path d="M0 2.500L6.500 1.500v6H0zM7.500 1.400L16 0v7.500H7.500zM0 8.500h6.500v6L0 13.500zM7.500 8.500H16V16l-8.500-1.400z" />
      </svg>
      <Search className="ml-[31px] w-[16px] h-[17px] -scale-x-100" strokeWidth={1.3} />
      <svg viewBox="0 0 16 16" className="ml-[32px] w-[16px] h-[17px]" fill="none" stroke="#fff">
        <path d="M1 1.500h11M1 14.500h11M2.500 4.500h8v7h-8zM14 4.500h2M14 8h2" />
      </svg>
      <div className="ml-[20px] flex">
        <div className="w-[49px] h-[40px] flex items-center justify-center">
          <svg viewBox="0 0 24 24" className="w-[24px] h-[24px]" fill="none">
            <path d="M5 13h15c0-5-3-8-7.500-8S5 8 5 13s3.500 8 7.500 8c3.500 0 6-2 7-4.500" stroke="#3bb7f0" strokeWidth="3.500" />
            <path d="M2 22c-2-3 4-14 20-20-3 0-6 1-9 3C6 9 1 17 2 22z" fill="#f4c430" stroke="#f4c430" />
          </svg>
        </div>
        <TaskSlot>
          <svg viewBox="0 0 22 20" className="w-[22px] h-[20px]">
            <path d="M0 2h8l2 2h12v16H0z" fill="#f7d774" />
            <rect x="7" y="11" width="9" height="9" fill="#3b9ad9" />
          </svg>
        </TaskSlot>
        <TaskSlot>
          <svg viewBox="0 0 22 22" className="w-[22px] h-[22px]">
            <circle cx="11" cy="11" r="11" fill="#db4437" />
            <path d="M11 11L1.500 16.500A11 11 0 0 0 11 22z" fill="#0f9d58" />
            <path d="M11 11v11A11 11 0 0 0 21.500 6H11z" fill="#f4b400" />
            <circle cx="11" cy="11" r="5" fill="#fff" />
            <circle cx="11" cy="11" r="4" fill="#4285f4" />
          </svg>
        </TaskSlot>
        <TaskSlot>
          <svg viewBox="0 0 22 24" className="w-[22px] h-[24px]">
            <rect x="6" y="0" width="16" height="17" rx="2" fill="#5bb974" />
            <path d="M1 5h15v13H6l-5 5z" fill="#0f9d58" />
          </svg>
        </TaskSlot>
        <TaskSlot>
          <div className="w-[24px] h-[24px] bg-[#0a5fd9] flex items-center justify-center text-[15px] font-bold">Ui</div>
        </TaskSlot>
        <TaskSlot>
          <svg viewBox="0 0 24 24" className="w-[23px] h-[23px]" fill="none" stroke="#093f4e" strokeWidth="2" strokeLinecap="round">
            <circle cx="12" cy="12" r="12" fill="#1ed760" stroke="none" />
            <path d="M6 9c4-1 9-1 12 1M7 13c3-1 7-1 10 1M8 16c3-1 6-.500 8 1" />
          </svg>
        </TaskSlot>
        <TaskSlot>
          <svg viewBox="0 0 24 24" className="w-[24px] h-[24px]">
            <rect width="24" height="24" fill="#2ecc71" />
            <rect x="3" y="3" width="18" height="18" fill="#093f4e" />
            <path d="M9 7l8 5-8 5z" fill="#2ecc71" />
          </svg>
        </TaskSlot>
        <TaskSlot active>
          <svg viewBox="0 0 24 22" className="w-[24px] h-[22px]">
            <rect x="6" width="18" height="22" rx="1" fill="#21a366" />
            <rect x="15" y="11" width="9" height="11" fill="#107c41" />
            <rect y="4" width="13" height="14" rx="1" fill="#185c37" />
            <text x="6.500" y="15" textAnchor="middle" fontSize="10" fontWeight="bold" fill="#fff">X</text>
          </svg>
        </TaskSlot>
      </div>
      <ChevronUp className="ml-[1078px] w-[16px] h-[16px]" strokeWidth={1.4} />
      <div className="ml-[16px]"><AuraIcon /></div>
      <div className="ml-[16px] w-[15px] h-[17px] rounded-full bg-[#5a9ac2] flex items-center justify-center">
        <div className="w-[7px] h-[7px] rounded-[2px] bg-[#333]" />
      </div>
      <Volume2 className="ml-[15px] w-[17px] h-[17px]" strokeWidth={1.3} />
      <svg viewBox="0 0 17 12" className="ml-[15px] w-[17px] h-[12px]" fill="none" stroke="#fff">
        <path d="M5.500 1.500h11v9h-11zM0 6h3M3 4v4" />
        <rect x="7" y="3" width="7" height="6" fill="#fff" />
      </svg>
      <svg viewBox="0 0 15 18" className="ml-[16px] w-[15px] h-[17px]" fill="none" stroke="#fff">
        <path d="M4 .5h10.500v11H4M.5 3.500h5v5h-5zM7.500 11.500v5M3 16.500h10" />
      </svg>
      <div className="ml-[11px] w-[70px] text-center text-[11.5px] leading-[18px] whitespace-nowrap">
        <div>12:04</div>
        <div>19.03.2021</div>
      </div>
      <div className="ml-[8px] relative w-[18px] h-[17px] bg-white">
        <div className="mx-[3px] mt-[4px] h-px bg-[#093f4e]" />
        <div className="mx-[3px] mt-[3px] h-px bg-[#093f4e]" />
        <div className="absolute -right-[4px] -bottom-[9px] w-[15px] h-[15px] rounded-full bg-[#2f93a8] border border-[#093f4e] text-[10px] font-bold flex items-center justify-center">1</div>
      </div>
    </div>
  )
}

export default function App() {
  return (
    <div className="w-[1920px] h-[1080px] flex flex-col overflow-hidden relative bg-white font-['Noto_Sans',sans-serif]">
      <TitleBar />
      <TabRow />
      <Ribbon />
      <FormulaBar />
      <Sheet />
      <SheetTabs />
      <StatusBar />
      <Taskbar />
      <div className="absolute left-[1540px] top-[967px] w-[364px] h-[61px] bg-[#2f93a8] flex items-center pl-[16px] gap-[15px] text-white text-[15px] font-medium">
        <AuraIcon />
        Opening EGA workpaper.
      </div>
    </div>
  )
}
